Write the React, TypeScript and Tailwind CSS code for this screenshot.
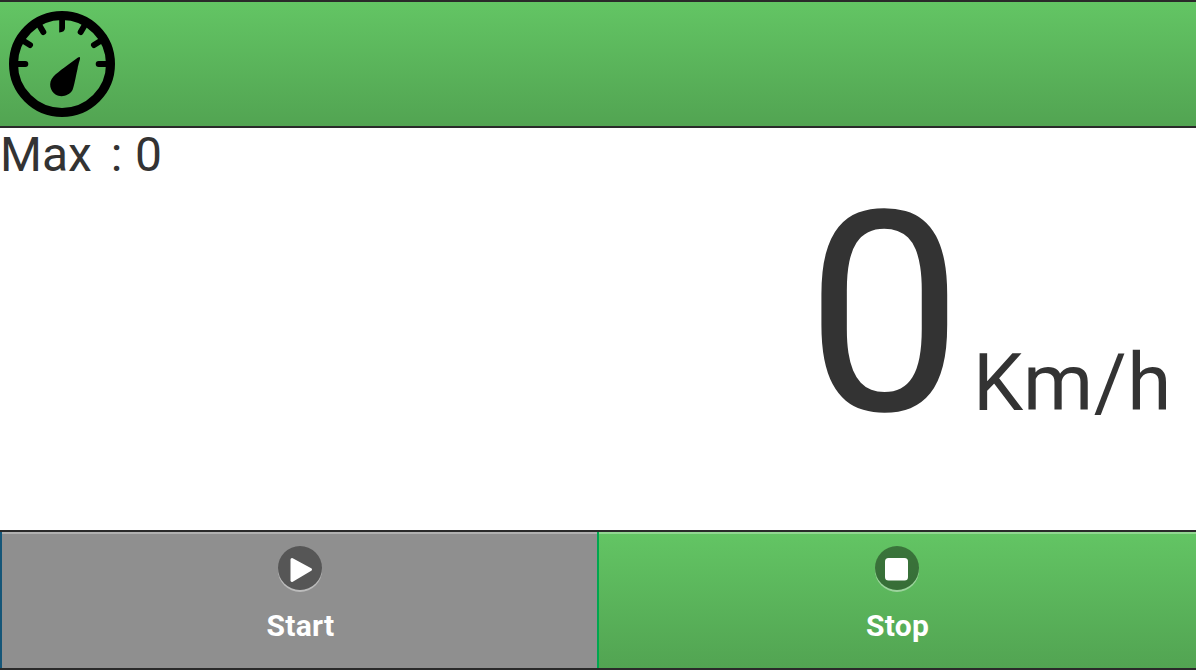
import type { ReactNode } from "react";
import { clsx } from "clsx";

function GaugeIcon() {
  return (
    <svg viewBox="0 0 106 106" className="size-[106px]" aria-hidden="true">
      <circle cx="53" cy="53" r="48.5" fill="none" stroke="#000" strokeWidth="9" />
      <g fill="none" stroke="#000" strokeWidth="6" strokeLinecap="round">
        <path d="M7 53h9.300M99 53h-9.300" />
        <path d="M13 29l8 5M93 29l-8 5" />
        <path d="M29 12l5.300 9M77 12l-5.300 9" />
      </g>
      <path d="M50.200 5h5.800v12q0 4-5.800 4.500z" />
      <path d="M71 46.500Q70.500 45.500 69 46.500C60 53 50 60 44.500 65.500C38.500 72 41.500 80 46.500 83.500C52 87 60 85 63.500 79C65 75.500 66.500 67 68.500 58C69.500 52 71.500 48 71 46.500z" />
    </svg>
  );
}

interface ControlButtonProps {
  label: string;
  tone: "gray" | "green";
  children: ReactNode;
}

function ControlButton({ label, tone, children }: ControlButtonProps) {
  return (
    <button
      type="button"
      className={clsx(
        "flex w-[597px] flex-col items-center border-l-2 pt-[14px] text-white shadow-[inset_0_2px_0_rgba(255,255,255,0.3)]",
        tone === "gray"
          ? "border-[#155678] bg-[#8f8f8f]"
          : "border-[#00a650] bg-linear-to-b from-[#63c564] to-[#52a452]"
      )}
    >
      <span className="flex size-11 items-center justify-center rounded-full bg-black/40 shadow-[0_2px_0_rgba(255,255,255,0.4)]">
        {children}
      </span>
      <span className="mt-[17px] pl-[2px] text-[30px] leading-[38px] font-bold tracking-[0.3px]">{label}</span>
    </button>
  );
}

export default function App() {
  const speed = 0;
  const maxSpeed = 0;

  return (
    <div className="flex h-[670px] w-[1196px] flex-col overflow-hidden bg-white font-['Roboto',sans-serif] text-[#333]">
      <header className="h-32 shrink-0 border-y-2 border-[#2a2a2a] bg-linear-to-b from-[#63c564] to-[#52a452] pt-[9px] pl-[9px]">
        <GaugeIcon />
      </header>

      <main className="flex flex-1 flex-col">
        <p className="text-[48px] leading-[54px] whitespace-pre [word-spacing:-2.4px]">
          Max{"  "}<span className="mr-[3px]">:</span> {maxSpeed}
        </p>
        <div className="flex items-baseline justify-end pt-3 pr-6 leading-[240px]">
          <span className="text-[280px]">{speed}</span>
          <span className="ml-[10px] text-[80px] tracking-[0.6px]">Km/h</span>
        </div>
      </main>

      <footer className="flex h-[140px] shrink-0 border-y-2 border-[#2a2a2a] bg-linear-to-b from-[#63c564] to-[#52a452]">
        <ControlButton label="Start" tone="gray">
          <svg viewBox="0 0 44 44" className="size-11" aria-hidden="true">
            <path d="M14 13.500L32.500 23.500L14 34.500z" fill="#fff" stroke="#fff" strokeWidth="3" strokeLinejoin="round" />
          </svg>
        </ControlButton>
        <ControlButton label="Stop" tone="green">
          <svg viewBox="0 0 44 44" className="size-11" aria-hidden="true">
            <rect x="10" y="12" width="23" height="22.500" rx="3.500" fill="#fff" />
          </svg>
        </ControlButton>
        {/* closes the row with the same bevel as the buttons */}
        <div className="flex-1 shadow-[inset_0_2px_0_rgba(255,255,255,0.3)]" />
      </footer>
    </div>
  );
}
